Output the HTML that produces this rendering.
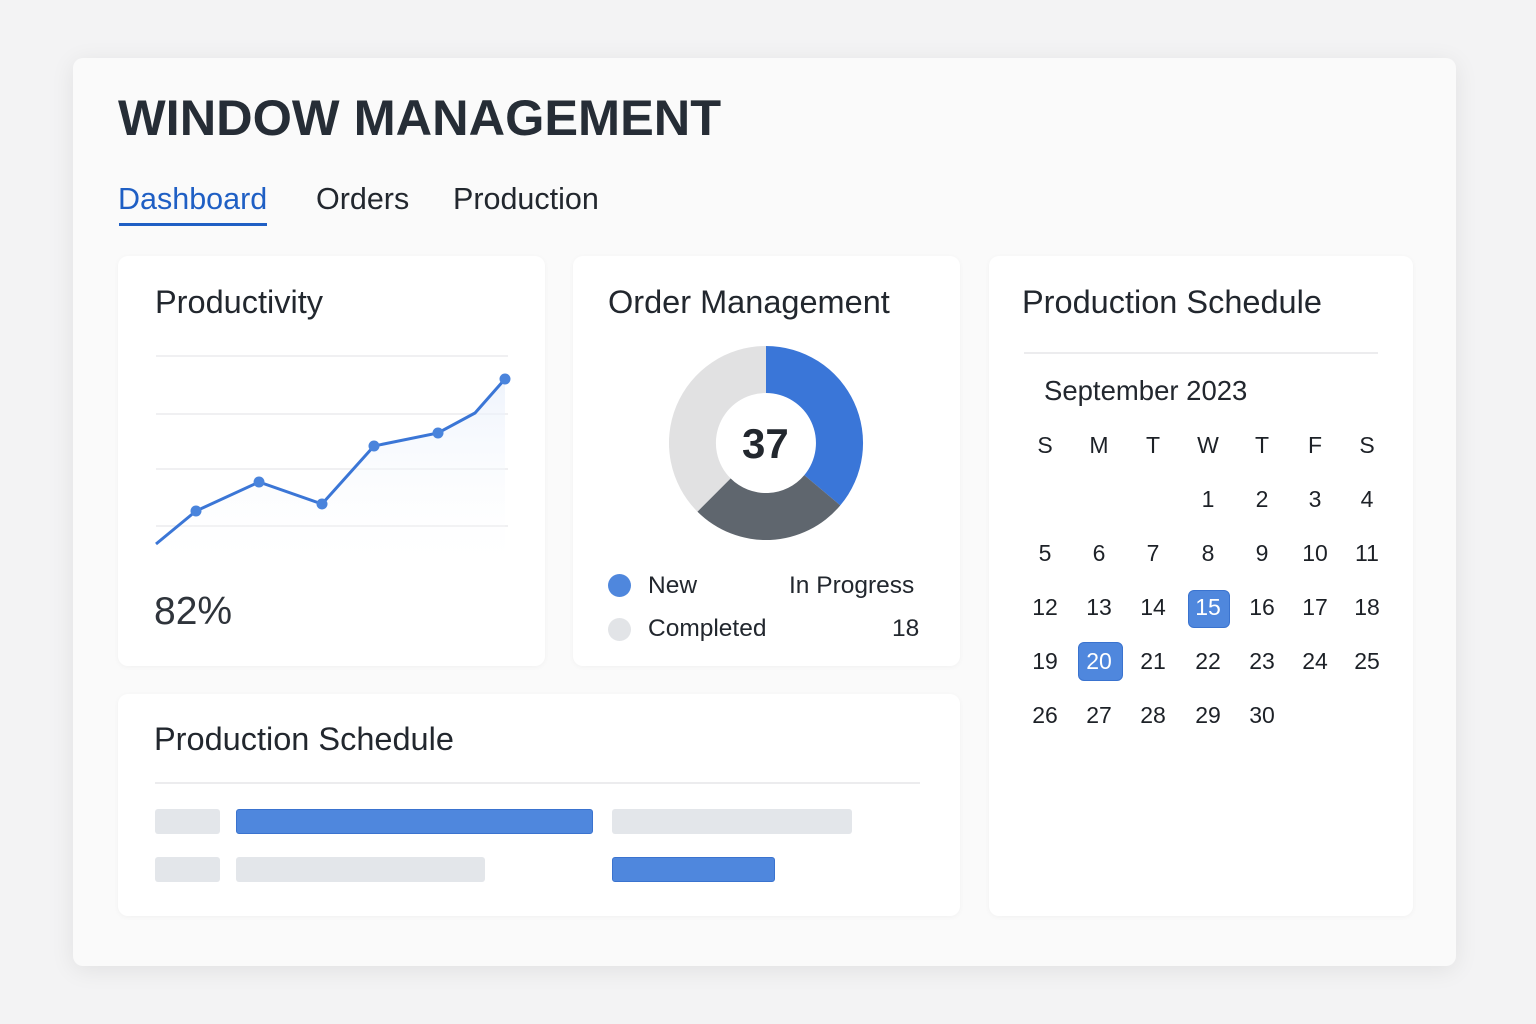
<!DOCTYPE html>
<html><head><style>
*{margin:0;padding:0;box-sizing:border-box}
body{width:1536px;height:1024px;background:#f3f3f4;font-family:"Liberation Sans",sans-serif;color:#22272e;position:relative;overflow:hidden}
.a{position:absolute}
.main{left:73px;top:58px;width:1383px;height:908px;background:#fafafa;border-radius:10px;box-shadow:0 4px 24px rgba(0,0,0,.08)}
.card{background:#fff;border-radius:10px;box-shadow:0 1px 6px rgba(0,0,0,.04)}
.t{font-size:32.5px;white-space:nowrap}
.c{position:absolute;width:50px;text-align:center;font-size:23px;transform:translate(-25px,-14px);color:#1d2127}
.hl{position:absolute;background:#4f87dd;border:1px solid #3a73cf;border-radius:6px}
.bar{position:absolute;height:25px;border-radius:3px}
</style></head><body>
<div class="a main"></div>
<div class="a" style="left:118px;top:88px;font-size:50.5px;font-weight:bold;color:#262d36">WINDOW MANAGEMENT</div>
<div class="a" style="left:118px;top:182px;font-size:30.5px;color:#1f5fc4">Dashboard</div>
<div class="a" style="left:119px;top:223px;width:148px;height:3px;background:#1f5fc4"></div>
<div class="a" style="left:316px;top:182px;font-size:30.5px">Orders</div>
<div class="a" style="left:453px;top:182px;font-size:30.5px">Production</div>

<div class="a card" style="left:118px;top:256px;width:427px;height:410px"></div>
<div class="a t" style="left:155px;top:284px">Productivity</div>
<svg class="a" style="left:118px;top:330px" width="420" height="260">
<defs><linearGradient id="g" x1="0" y1="0" x2="0" y2="1"><stop offset="0" stop-color="#e8effb" stop-opacity=".7"/><stop offset="1" stop-color="#fff" stop-opacity="0"/></linearGradient></defs>
<g stroke="#ececee" stroke-width="1.5"><line x1="38" y1="26" x2="390" y2="26"/><line x1="38" y1="84" x2="390" y2="84"/><line x1="38" y1="139" x2="390" y2="139"/><line x1="38" y1="196" x2="390" y2="196"/></g>
<path d="M38 214 L78 181 L141 152 L204 174 L256 116 L320 103 L357 83 L387 49 L387 250 L38 250Z" fill="url(#g)"/>
<polyline points="38,214 78,181 141,152 204,174 256,116 320,103 357,83 387,49" fill="none" stroke="#3b76d6" stroke-width="3"/>
<g fill="#4a84dc"><circle cx="78" cy="181" r="5.5"/><circle cx="141" cy="152" r="5.5"/><circle cx="204" cy="174" r="5.5"/><circle cx="256" cy="116" r="5.5"/><circle cx="320" cy="103" r="5.5"/><circle cx="387" cy="49" r="5.5"/></g>
</svg>
<div class="a" style="left:154px;top:590px;font-size:39px;color:#2f343b">82%</div>

<div class="a card" style="left:573px;top:256px;width:387px;height:410px"></div>
<div class="a t" style="left:608px;top:284px">Order Management</div>
<svg class="a" style="left:666px;top:343px" width="200" height="200">
<g transform="translate(100,100)">
<path d="M0 -97 A97 97 0 0 1 74.3 62.4 L38.3 32.1 A50 50 0 0 0 0 -50Z" fill="#3a76d8"/>
<path d="M74.3 62.4 A97 97 0 0 1 -68.6 68.6 L-35.4 35.4 A50 50 0 0 0 38.3 32.1Z" fill="#5f666e"/>
<path d="M-68.6 68.6 A97 97 0 0 1 0 -97 L0 -50 A50 50 0 0 0 -35.4 35.4Z" fill="#e1e1e2"/>
</g></svg>
<div class="a" style="left:742px;top:420px;font-size:42px;font-weight:bold;color:#22272e">37</div>
<div class="a" style="left:608px;top:574px;width:23px;height:23px;border-radius:50%;background:#4f87dd"></div>
<div class="a" style="left:648px;top:572px;font-size:24.5px">New</div>
<div class="a" style="left:789px;top:572px;font-size:24.5px">In Progress</div>
<div class="a" style="left:608px;top:618px;width:23px;height:23px;border-radius:50%;background:#e2e4e7"></div>
<div class="a" style="left:648px;top:615px;font-size:24.5px">Completed</div>
<div class="a" style="left:892px;top:615px;font-size:24.5px">18</div>

<div class="a card" style="left:118px;top:694px;width:842px;height:222px"></div>
<div class="a t" style="left:154px;top:721px">Production Schedule</div>
<div class="a" style="left:155px;top:782px;width:765px;height:2px;background:#ececee"></div>
<div class="bar" style="left:155px;top:809px;width:65px;background:#e3e6ea"></div>
<div class="bar" style="left:236px;top:809px;width:357px;background:#4f87dd;border:1px solid #3a73cf"></div>
<div class="bar" style="left:612px;top:809px;width:240px;background:#e3e6ea"></div>
<div class="bar" style="left:155px;top:857px;width:65px;background:#e3e6ea"></div>
<div class="bar" style="left:236px;top:857px;width:249px;background:#e3e6ea"></div>
<div class="bar" style="left:612px;top:857px;width:163px;background:#4f87dd;border:1px solid #3a73cf"></div>

<div class="a card" style="left:989px;top:256px;width:424px;height:660px"></div>
<div class="a t" style="left:1022px;top:284px">Production Schedule</div>
<div class="a" style="left:1024px;top:352px;width:354px;height:2px;background:#ececee"></div>
<div class="a" style="left:1044px;top:375px;font-size:27.5px">September 2023</div>
<div class="hl" style="left:1188px;top:590px;width:42px;height:38px"></div>
<div class="hl" style="left:1078px;top:642px;width:45px;height:39px"></div>
<div id="cal"></div>
<script>
var xs=[1045,1099,1153,1208,1262,1315,1367],ys=[446,500,554,608,662,716],h='';
'SMTWTFS'.split('').forEach(function(d,i){h+='<div class="c" style="left:'+xs[i]+'px;top:'+ys[0]+'px">'+d+'</div>'});
for(var n=1;n<=30;n++){var p=n+2,r=Math.floor(p/7)+1,c=p%7;var col=(n==15||n==20)?'color:#fff;':'';h+='<div class="c" style="'+col+'left:'+xs[c]+'px;top:'+ys[r]+'px">'+n+'</div>'}
document.getElementById('cal').innerHTML=h;
</script>
</body></html>
